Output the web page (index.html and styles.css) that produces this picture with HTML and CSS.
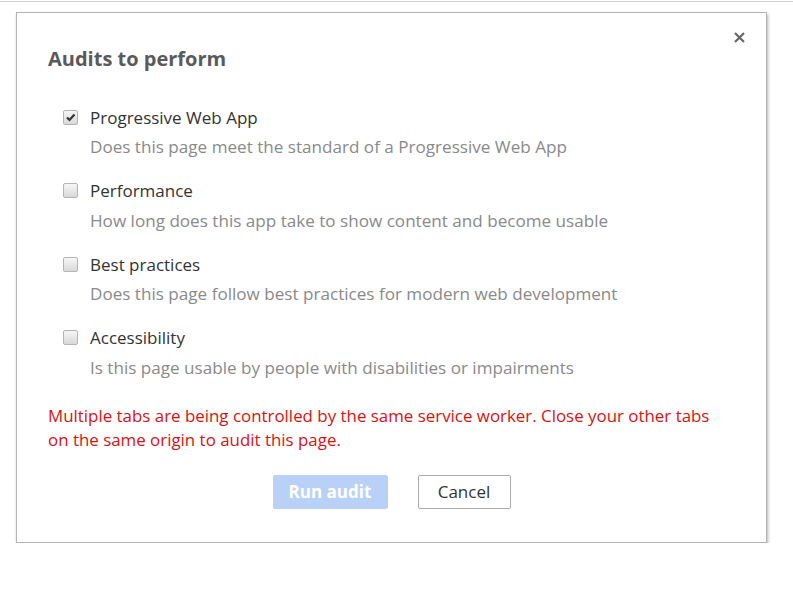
FILE: index.html
```html
<!DOCTYPE html>
<html>
<head>
<meta charset="utf-8">
<link rel="stylesheet" href="styles.css">
</head>
<body>
<div class="topline"></div>
<div class="dialog">
  <button class="close" aria-label="Close">
    <svg width="11" height="11" viewBox="0 0 11 11"><path d="M1 1 L10 10 M10 1 L1 10" stroke="#666" stroke-width="2.2" fill="none"/></svg>
  </button>
  <h1 class="title">Audits to perform</h1>
  <ul class="audits">
    <li class="audit">
      <div class="label-row"><span class="cb checked"><svg width="11" height="11" viewBox="0 0 11 11"><path d="M2 5.5 L4.5 8 L9.5 2.5" stroke="#333" stroke-width="2.2" fill="none"/></svg></span><span class="label">Progressive Web App</span></div>
      <div class="desc">Does this page meet the standard of a Progressive Web App</div>
    </li>
    <li class="audit">
      <div class="label-row"><span class="cb"></span><span class="label">Performance</span></div>
      <div class="desc">How long does this app take to show content and become usable</div>
    </li>
    <li class="audit">
      <div class="label-row"><span class="cb"></span><span class="label">Best practices</span></div>
      <div class="desc">Does this page follow best practices for modern web development</div>
    </li>
    <li class="audit">
      <div class="label-row"><span class="cb"></span><span class="label">Accessibility</span></div>
      <div class="desc">Is this page usable by people with disabilities or impairments</div>
    </li>
  </ul>
  <p class="error">Multiple tabs are being controlled by the same service worker. Close your other tabs on the same origin to audit this page.</p>
  <div class="buttons">
    <button class="btn primary">Run audit</button>
    <button class="btn">Cancel</button>
  </div>
</div>
</body>
</html>
```
FILE: styles.css
```css
html, body {
  margin: 0;
  padding: 0;
  background: #fff;
  font-family: "Open Sans", "Noto Sans", sans-serif;
}
.topline {
  height: 1px;
  margin-top: 1px;
  background: #cfcfcf;
}
.dialog {
  position: relative;
  margin: 10px 0 0 16px;
  height: 529px;
  border: 1px solid #b5b5b5;
  box-shadow: 1px 2px 3px rgba(0,0,0,0.3);
  padding: 0 31px;
  box-sizing: content-box;
  width: 687px;
}
.close {
  position: absolute;
  top: 19px;
  right: 21px;
  border: 0;
  background: none;
  padding: 0;
  width: 11px;
  height: 11px;
  display: flex;
}
.title {
  margin: 34px 0 0;
  font-size: 20px;
  line-height: 24px;
  font-weight: 700;
  color: #5a5a5a;
}
.audits {
  list-style: none;
  margin: 34px 0 0;
  padding: 0 0 0 15px;
}
.audit {
  margin-bottom: 19.5px;
}
.audit:last-child {
  margin-bottom: 0;
}
.label-row {
  display: flex;
  align-items: center;
  gap: 12px;
  height: 24px;
}
.cb {
  width: 13px;
  height: 13px;
  border: 1px solid #b4b4b4;
  border-radius: 2px;
  background: linear-gradient(#f6f6f6, #d8d8d8);
  display: flex;
  align-items: center;
  justify-content: center;
  flex: none;
}
.label {
  font-size: 17px;
  color: #333;
}
.desc {
  margin: 6px 0 0 27px;
  font-size: 17.1px;
  line-height: 24px;
  color: #8a8a8a;
}
.error {
  margin: 24px 0 0;
  max-width: 680px;
  font-size: 16.9px;
  line-height: 24px;
  color: #dd1111;
}
.buttons {
  display: flex;
  justify-content: center;
  gap: 30px;
  margin-top: 23px;
}
.btn {
  font-family: inherit;
  font-size: 17px;
  height: 34px;
  border-radius: 2px;
  border: 1px solid #ababab;
  background: #fff;
  color: #333;
  padding: 0;
  white-space: nowrap;
  width: 93px;
}
.btn.primary {
  width: 115px;
  border-color: #bad1f7;
  background: #bad1f7;
  color: #fff;
  font-weight: 700;
}
```
